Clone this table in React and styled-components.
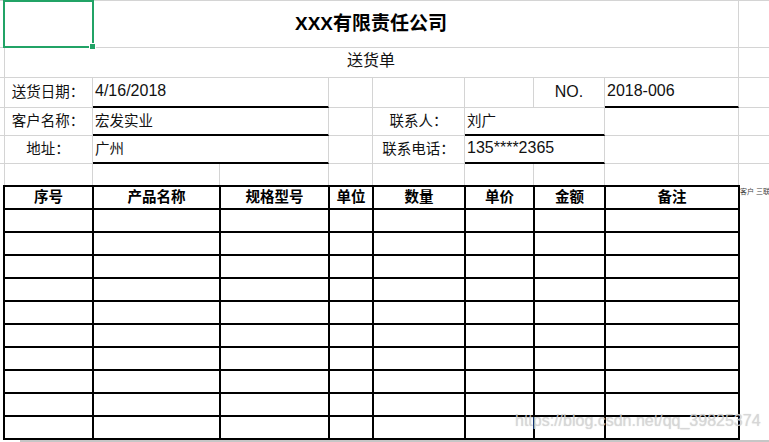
import React from 'react';
import styled, { createGlobalStyle } from 'styled-components';

const GRID = '#d4d4d4';
const GREEN = '#21a366';

const GlobalStyle = createGlobalStyle`
  html, body {
    margin: 0;
    padding: 0;
    background: #fff;
  }
  body {
    font-family: 'Liberation Sans', 'Noto Sans CJK SC', sans-serif;
    color: #111;
  }
`;

const Sheet = styled.div`
  position: relative;
  width: 769px;
  height: 442px;
  overflow: hidden;
  background: #fff;
`;

// upper part of the form, plain excel grid
const FormGrid = styled.div`
  display: grid;
  grid-template-columns: 4px 89px 127px 109px 44px 92px 69px 71px 134px 30px;
  grid-template-rows: 47px 30px 30px 28px 28px 21px;
  border-top: 1px solid ${GRID};
`;

const Cell = styled.div`
  grid-column: ${(p) => p.$col || 'auto'};
  box-sizing: border-box;
  display: flex;
  align-items: center;
  justify-content: ${(p) => (p.$center ? 'center' : 'flex-start')};
  padding: 0 2px ${(p) => (p.$num ? '2px' : '4px')};
  min-width: 0;
  overflow: hidden;
  white-space: nowrap;
  border-right: ${(p) => (p.$open ? 'none' : `1px solid ${GRID}`)};
  border-bottom: ${(p) => (p.$under ? '2px solid #000' : p.$flat ? 'none' : `1px solid ${GRID}`)};
  font-size: ${(p) => (p.$num ? '16px' : '14.5px')};
`;

const Title = styled(Cell)`
  font-size: 19px;
  font-weight: bold;
  color: #000;
  padding-bottom: 5px;
`;

const SubTitle = styled(Cell)`
  font-size: 16px;
  padding-bottom: 7px;
`;

const Selection = styled.div`
  position: absolute;
  left: 3px;
  top: 0;
  width: 91px;
  height: 48px;
  box-sizing: border-box;
  border: 2px solid ${GREEN};
  pointer-events: none;
`;

const Handle = styled.div`
  position: absolute;
  left: 89px;
  top: 43px;
  width: 7px;
  height: 7px;
  box-sizing: border-box;
  background: ${GREEN};
  border: 1px solid #fff;
`;

const TableRow = styled.div`
  display: flex;
  align-items: flex-start;
  margin-left: 3px;
`;

const Table = styled.div`
  display: grid;
  grid-template-columns: 87px 125px 107px 42px 90px 67px 69px 132px;
  grid-auto-rows: 21px;
  gap: 2px;
  padding: 2px;
  background: #000;
`;

const Th = styled.div`
  background: #fff;
  display: flex;
  align-items: center;
  justify-content: center;
  box-sizing: border-box;
  padding-bottom: 5px;
  font-size: 14.5px;
  font-weight: bold;
  color: #000;
`;

const Td = styled.div`
  background: #fff;
`;

const SideNote = styled.div`
  font-size: 7px;
  color: #444;
  white-space: nowrap;
  padding-top: 1px;
`;

const BottomBar = styled.div`
  margin-left: 20px;
  height: 2px;
  background: #c6c6c6;
`;

const Watermark = styled.div`
  position: absolute;
  left: 515px;
  top: 412px;
  font-family: 'Liberation Sans', sans-serif;
  font-size: 16px;
  color: rgba(215, 215, 215, 0.85);
  text-shadow: 0 0 1px rgba(120, 120, 120, 0.35);
  white-space: nowrap;
  pointer-events: none;
`;

const headers = ['序号', '产品名称', '规格型号', '单位', '数量', '单价', '金额', '备注'];
const rows = Array.from({ length: 10 });

const App = () => {
  return (
    <Sheet>
      <GlobalStyle />
      <FormGrid>
        <Cell />
        <Title $col="2 / 10" $center>XXX有限责任公司</Title>
        <Cell $open />

        <Cell />
        <SubTitle $col="2 / 10" $center>送货单</SubTitle>
        <Cell $open />

        <Cell />
        <Cell $center>送货日期：</Cell>
        <Cell $col="span 2" $under $num>4/16/2018</Cell>
        <Cell />
        <Cell />
        <Cell />
        <Cell $center $num>NO.</Cell>
        <Cell $under $num>2018-006</Cell>
        <Cell $open />

        <Cell />
        <Cell $center>客户名称：</Cell>
        <Cell $col="span 2" $under>宏发实业</Cell>
        <Cell />
        <Cell $center>联系人：</Cell>
        <Cell $col="span 2" $under>刘广</Cell>
        <Cell />
        <Cell $open />

        <Cell />
        <Cell $center>地址：</Cell>
        <Cell $col="span 2" $under>广州</Cell>
        <Cell />
        <Cell $center>联系电话：</Cell>
        <Cell $col="span 2" $under $num>135****2365</Cell>
        <Cell />
        <Cell $open />

        {Array.from({ length: 9 }).map((_, i) => (
          <Cell key={i} $flat />
        ))}
        <Cell $open $flat />
      </FormGrid>

      <TableRow>
        <Table>
          {headers.map((h) => (
            <Th key={h}>{h}</Th>
          ))}
          {rows.map((_, r) => headers.map((h) => <Td key={`${r}-${h}`} />))}
        </Table>
        <SideNote>客户 三联</SideNote>
      </TableRow>
      <BottomBar />

      <Selection />
      <Handle />
      <Watermark>https://blog.csdn.net/qq_39825374</Watermark>
    </Sheet>
  );
};

export default App;
